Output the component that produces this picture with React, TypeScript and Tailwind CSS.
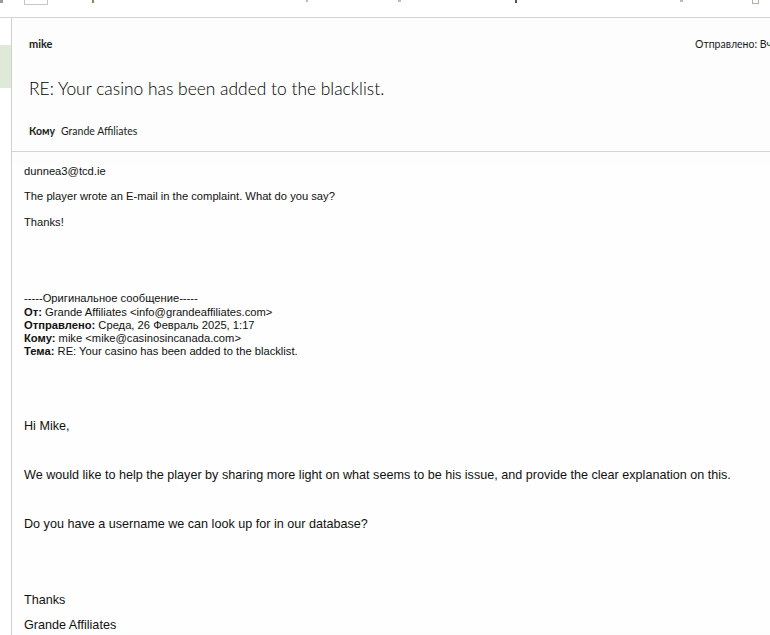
import React from "react";

export default function App() {
  const hdr = { fontFamily: "Lato, 'Noto Sans', sans-serif" };
  const body = { fontFamily: "'Liberation Sans', Arial, sans-serif" };
  return (
    <div className="w-[770px] h-[635px] overflow-hidden bg-[#fdfdfd] flex flex-col">
      {/* toolbar remnant */}
      <div className="h-[18px] shrink-0 border-b border-[#d4d4d4] relative bg-white">
        <div className="absolute left-[0px] top-0 w-[3px] h-[3px] bg-[#9a9a9a]" />
        <div className="absolute left-[24px] top-[-2px] w-[24px] h-[7px] border border-[#c8c8c8] bg-white" />
        <div className="absolute left-[92px] top-0 w-[2px] h-[3px] bg-[#8a8a70]" />
        <div className="absolute left-[306px] top-0 w-[2px] h-[2px] bg-[#bbbbbb]" />
        <div className="absolute left-[398px] top-0 w-[3px] h-[2px] bg-[#bbbbbb]" />
        <div className="absolute left-[515px] top-0 w-[2px] h-[3px] bg-[#555]" />
        <div className="absolute left-[680px] top-0 w-[3px] h-[2px] bg-[#bbbbbb]" />
        <div className="absolute left-[752px] top-[-2px] w-[7px] h-[6px] border border-[#a7bd8f]" />
      </div>
      <div className="flex flex-1 min-h-0">
        {/* left strip */}
        <div className="w-[11px] shrink-0 bg-white">
          <div className="mt-[27px] h-[43px] bg-[#dfe9d7]" />
        </div>
        {/* main */}
        <div className="flex-1 min-w-0 border-l border-[#d0d0d0] overflow-hidden">
          <div className="pl-[17px] pt-[19px] pb-[13px] border-b border-[#d4d4d4] text-[#1c1c1c]" style={hdr}>
            <div className="grid grid-cols-[666px_200px] leading-[14px]">
              <div className="font-bold text-[11px]">mike</div>
              <div className="whitespace-nowrap text-[10.5px]">Отправлено: Вчера, 18:42</div>
            </div>
            <div className="mt-[26px] text-[17.4px] leading-[24px] font-light text-black">
              RE: Your casino has been added to the blacklist.
            </div>
            <div className="mt-[23px] text-[10.5px] leading-[14px] flex gap-[6px]">
              <span className="font-bold">Кому</span>
              <span>Grande Affiliates</span>
            </div>
          </div>
          <div className="pl-[12px] text-[#111] bg-[#fefefe]" style={body}>
            <div className="text-[11.2px] leading-[13px]">
              <div className="mt-[13px]">dunnea3@tcd.ie</div>
              <div className="mt-[12px]">The player wrote an E-mail in the complaint. What do you say?</div>
              <div className="mt-[13px]">Thanks!</div>
              <div className="mt-[63px]">-----Оригинальное сообщение-----</div>
              <div className="mt-[1px]"><b>От:</b> Grande Affiliates &lt;info@grandeaffiliates.com&gt;</div>
              <div><b>Отправлено:</b> Среда, 26 Февраль 2025, 1:17</div>
              <div><b>Кому:</b> mike &lt;mike@casinosincanada.com&gt;</div>
              <div><b>Тема:</b> RE: Your casino has been added to the blacklist.</div>
            </div>
            <div className="text-[12.6px] leading-[15px]">
              <div className="mt-[61px]">Hi Mike,</div>
              <div className="mt-[34px] whitespace-nowrap">We would like to help the player by sharing more light on what seems to be his issue, and provide the clear explanation on this.</div>
              <div className="mt-[34px]">Do you have a username we can look up for in our database?</div>
              <div className="mt-[61px]">Thanks</div>
              <div className="mt-[10px]">Grande Affiliates</div>
            </div>
          </div>
        </div>
      </div>
    </div>
  );
}
